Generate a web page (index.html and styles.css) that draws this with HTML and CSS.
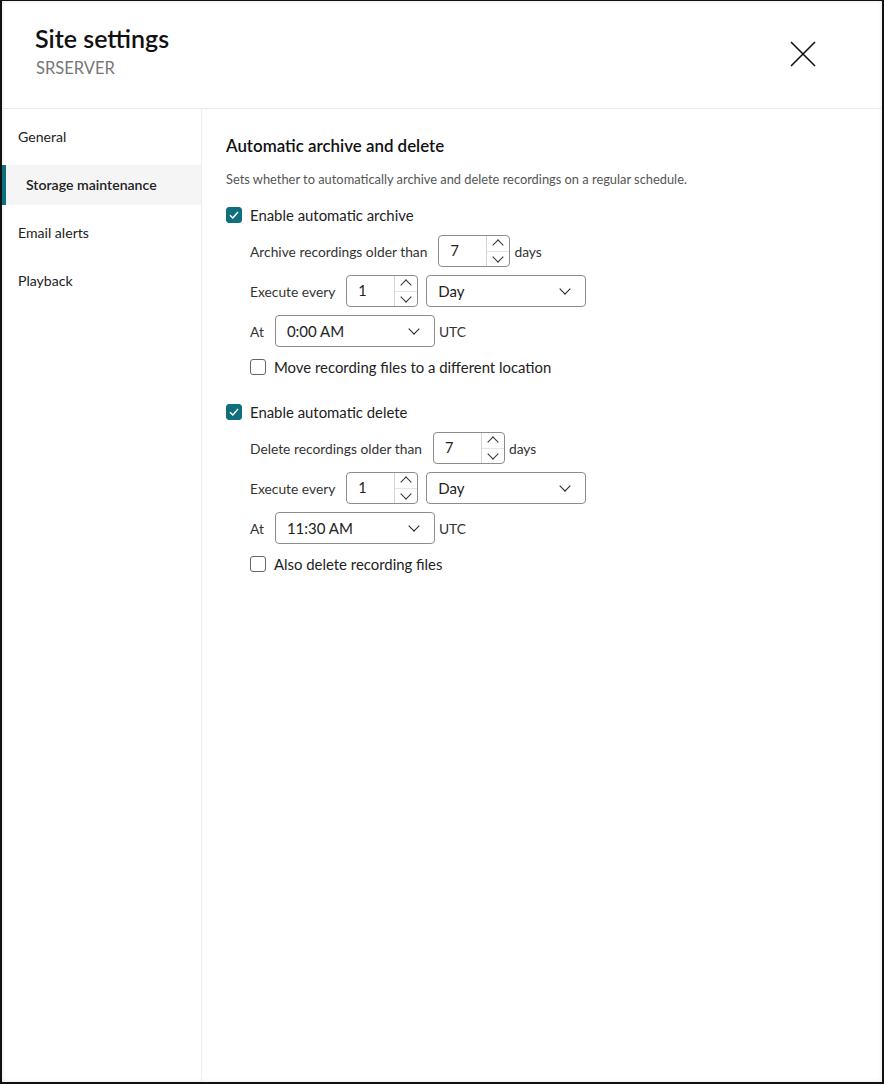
FILE: index.html
```html
<!DOCTYPE html>
<html lang="en">

<head>
    <meta charset="UTF-8">
    <title>Site settings</title>
    <link rel="stylesheet" href="styles.css">
</head>

<body>
    <div class="frame">
        <header class="top">
            <div class="titles">
                <h1>Site settings</h1>
                <div class="subtitle">SRSERVER</div>
            </div>
            <button class="close" aria-label="Close">
                <svg width="26" height="26" viewBox="0 0 26 26">
                    <path d="M1 1 L25 25 M25 1 L1 25" stroke="#111" stroke-width="1.6" fill="none" />
                </svg>
            </button>
        </header>

        <div class="main">
            <nav class="sidebar">
                <div class="nav-item">General</div>
                <div class="nav-item active">Storage maintenance</div>
                <div class="nav-item">Email alerts</div>
                <div class="nav-item">Playback</div>
            </nav>

            <section class="content">
                <h2>Automatic archive and delete</h2>
                <p class="desc">Sets whether to automatically archive and delete recordings on a regular schedule.</p>

                <!-- archive -->
                <label class="check-row">
                    <span class="box checked"><svg width="12" height="12" viewBox="0 0 12 12"><path d="M2 6.2 L4.8 9 L10 3" stroke="#fff" stroke-width="1.5" fill="none" /></svg></span>
                    Enable automatic archive
                </label>
                <div class="group">
                    <div class="row row-first">
                        <span class="lbl">Archive recordings older than</span>
                        <div class="spin">
                            <span class="val">7</span>
                            <span class="arrows"><span class="up"></span><span class="down"></span></span>
                        </div>
                        <span class="unit">days</span>
                    </div>
                    <div class="row">
                        <span class="lbl">Execute every</span>
                        <div class="spin">
                            <span class="val">1</span>
                            <span class="arrows"><span class="up"></span><span class="down"></span></span>
                        </div>
                        <div class="select wide"><span>Day</span><span class="chev"></span></div>
                    </div>
                    <div class="row">
                        <span class="lbl">At</span>
                        <div class="select time"><span>0:00 AM</span><span class="chev"></span></div>
                        <span class="unit">UTC</span>
                    </div>
                    <label class="check-row sub">
                        <span class="box"></span>
                        Move recording files to a different location
                    </label>
                </div>

                <!-- delete -->
                <label class="check-row second">
                    <span class="box checked"><svg width="12" height="12" viewBox="0 0 12 12"><path d="M2 6.2 L4.8 9 L10 3" stroke="#fff" stroke-width="1.5" fill="none" /></svg></span>
                    Enable automatic delete
                </label>
                <div class="group">
                    <div class="row row-first">
                        <span class="lbl">Delete recordings older than</span>
                        <div class="spin">
                            <span class="val">7</span>
                            <span class="arrows"><span class="up"></span><span class="down"></span></span>
                        </div>
                        <span class="unit">days</span>
                    </div>
                    <div class="row">
                        <span class="lbl">Execute every</span>
                        <div class="spin">
                            <span class="val">1</span>
                            <span class="arrows"><span class="up"></span><span class="down"></span></span>
                        </div>
                        <div class="select wide"><span>Day</span><span class="chev"></span></div>
                    </div>
                    <div class="row">
                        <span class="lbl">At</span>
                        <div class="select time"><span>11:30 AM</span><span class="chev"></span></div>
                        <span class="unit">UTC</span>
                    </div>
                    <label class="check-row sub">
                        <span class="box"></span>
                        Also delete recording files
                    </label>
                </div>
            </section>
        </div>
    </div>
</body>

</html>
```

FILE: styles.css
```css
* {
    box-sizing: border-box;
}

body {
    margin: 0;
    font-family: Lato, "Liberation Sans", sans-serif;
    color: #222;
    background: #fff;
}

.frame {
    width: 884px;
    height: 1084px;
    border: 2px solid #111;
    border-top-width: 1px;
    display: flex;
    flex-direction: column;
    box-shadow: inset 0 0 4px rgba(0, 0, 0, 0.12);
}

.top {
    height: 108px;
    flex: none;
    display: flex;
    justify-content: space-between;
    align-items: flex-start;
    border-bottom: 1px solid #e9e9e9;
    padding: 22px 0 0 33px;
}

.top h1 {
    margin: 0;
    font-size: 25px;
    font-weight: 600;
    color: #111;
    line-height: 30px;
}

.subtitle {
    font-size: 16.5px;
    color: #777;
    margin-top: 5px;
    padding-left: 1px;
}

.close {
    border: none;
    background: none;
    padding: 0;
    margin: 18px 66px 0 0;
    width: 26px;
    height: 26px;
    cursor: pointer;
}

.main {
    flex: 1;
    display: flex;
}

.sidebar {
    width: 200px;
    flex: none;
    border-right: 1px solid #ededed;
    padding-top: 8px;
}

.nav-item {
    height: 40px;
    line-height: 40px;
    margin-bottom: 8px;
    padding-left: 16px;
    font-size: 14.1px;
    color: #222;
}

.nav-item.active {
    background: #f5f5f5;
    border-left: 4px solid #0f6f7c;
    padding-left: 20px;
    font-weight: 600;
}

.content {
    flex: 1;
    padding: 27px 0 0 24px;
}

.content h2 {
    margin: 0;
    font-size: 16.9px;
    font-weight: 600;
    line-height: 20px;
    color: #111;
}

.desc {
    margin: 15px 0 0;
    font-size: 12.85px;
    color: #555;
    line-height: 16px;
}

.check-row {
    display: flex;
    align-items: center;
    gap: 8px;
    font-size: 14.9px;
    color: #222;
    height: 20px;
    margin-top: 18px;
}

.check-row.second {
    margin-top: 25px;
}

.check-row.sub {
    margin-top: 10px;
}

.box {
    width: 16px;
    height: 16px;
    border: 1.5px solid #666;
    border-radius: 3px;
    display: flex;
    align-items: center;
    justify-content: center;
    flex: none;
}

.box.checked {
    background: #0f6f7c;
    border-color: #0f6f7c;
}

.group {
    padding-left: 24px;
}

.row {
    display: flex;
    align-items: center;
    height: 32px;
    margin-top: 8px;
    font-size: 13.8px;
    color: #333;
}

.row.row-first {
    margin-top: 10px;
}

.lbl {
    margin-right: 11px;
}

.spin {
    width: 72px;
    height: 32px;
    border: 1px solid #8c8c8c;
    border-radius: 4px;
    display: flex;
    font-size: 14.5px;
    color: #222;
}

.spin .val {
    flex: 1;
    padding-left: 11px;
    line-height: 30px;
}

.arrows {
    width: 23px;
    border-left: 1px solid #d4d4d4;
    display: flex;
    flex-direction: column;
}

.arrows span {
    flex: 1;
    position: relative;
}

.arrows .up {
    border-bottom: 1px solid #e4e4e4;
}

.arrows span::after {
    content: "";
    position: absolute;
    left: 7px;
    width: 7px;
    height: 7px;
    border-left: 1.3px solid #333;
    border-top: 1.3px solid #333;
}

.arrows .up::after {
    top: 5px;
    transform: rotate(45deg);
}

.arrows .down::after {
    top: 1px;
    transform: rotate(-135deg);
}

.unit {
    margin-left: 4px;
}

.select {
    height: 32px;
    border: 1px solid #8c8c8c;
    border-radius: 4px;
    display: flex;
    align-items: center;
    justify-content: space-between;
    padding: 0 16px 0 11px;
    font-size: 15px;
    color: #222;
}

.select.wide {
    width: 160px;
    margin-left: 8px;
}

.select.time {
    width: 160px;
}

.chev {
    width: 8px;
    height: 8px;
    border-right: 1.3px solid #222;
    border-bottom: 1.3px solid #222;
    transform: rotate(45deg);
    margin-top: -5px;
}
```
